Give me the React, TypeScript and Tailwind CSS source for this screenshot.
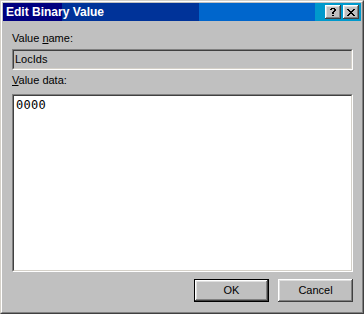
import React from "react";

const raised =
  "shadow-[inset_-1px_-1px_0_#404040,inset_1px_1px_0_#ffffff,inset_-2px_-2px_0_#808080,inset_2px_2px_0_#dfdfdf]";

function CloseGlyph() {
  const rows = [
    "XX....XX",
    ".XX..XX.",
    "..XXXX..",
    "...XX...",
    "..XXXX..",
    ".XX..XX.",
    "XX....XX",
  ];
  return (
    <svg width="8" height="7" viewBox="0 0 8 7" shapeRendering="crispEdges">
      {rows.flatMap((r, y) =>
        r.split("").map((c, x) =>
          c === "X" ? <rect key={`${x}-${y}`} x={x} y={y} width={1} height={1} fill="#000" /> : null
        )
      )}
    </svg>
  );
}

function HelpGlyph() {
  const rows = [
    ".XXXX.",
    "XX..XX",
    "....XX",
    "...XX.",
    "..XX..",
    "..XX..",
    "......",
    "..XX..",
  ];
  return (
    <svg width="6" height="8" viewBox="0 0 6 8" shapeRendering="crispEdges">
      {rows.flatMap((r, y) =>
        r.split("").map((c, x) =>
          c === "X" ? <rect key={`${x}-${y}`} x={x} y={y} width={1} height={1} fill="#000" /> : null
        )
      )}
    </svg>
  );
}

export default function App() {
  return (
    <div
      className="w-[364px] h-[314px] bg-[#c0c0c0] border border-t-[#d4d0c8] border-l-[#d4d0c8] border-r-[#404040] border-b-[#404040] text-black"
      style={{ fontFamily: '"Liberation Sans", Arial, sans-serif' }}
    >
      <div className="h-full border border-t-white border-l-white border-r-[#808080] border-b-[#808080] p-px flex flex-col">
        {/* Title bar */}
        <div className="h-[18px] flex items-center pl-[3px] pr-[2px] bg-[linear-gradient(to_right,#000080_0px,#000080_59px,#003399_59px,#003399_196px,#0066cc_196px,#0066cc_312px,#0099cc_312px)]">
          <span className="text-white font-bold text-[12px] leading-[14px] flex-1">Edit Binary Value</span>
          <div className={`w-[16px] h-[14px] bg-[#c0c0c0] flex items-center justify-center ${raised}`}>
            <HelpGlyph />
          </div>
          <div className={`w-[16px] h-[14px] ml-[2px] bg-[#c0c0c0] flex items-center justify-center ${raised}`}>
            <CloseGlyph />
          </div>
        </div>

        {/* Content */}
        <div className="flex-1 flex flex-col pl-[9px] pr-[8px] text-[11px] leading-[13px]">
          <div className="mt-[11px]">
            Value <span className="underline">n</span>ame:
          </div>
          <div className="mt-[4px] h-[21px] border border-t-[#808080] border-l-[#808080] border-r-white border-b-white">
            <div className="h-full border border-t-[#404040] border-l-[#404040] border-r-[#d4d0c8] border-b-[#d4d0c8] flex items-center pl-[1px]">
              LocIds
            </div>
          </div>
          <div className="mt-[4px]">
            <span className="underline">V</span>alue data:
          </div>
          <div className="mt-[7px] h-[178px] border border-t-[#808080] border-l-[#808080] border-r-white border-b-white">
            <div className="h-full bg-white border border-t-[#404040] border-l-[#404040] border-r-[#d4d0c8] border-b-[#d4d0c8] pl-[2px] pt-[2px]">
              <span className="text-[12px] leading-[14px] tracking-[0.3px]" style={{ fontFamily: '"DejaVu Sans Mono", monospace' }}>
                0000
              </span>
            </div>
          </div>
          <div className="mt-[7px] flex justify-end gap-[9px]">
            <div className="w-[75px] h-[23px] border border-black">
              <div className={`h-full flex items-center justify-center ${raised}`}>OK</div>
            </div>
            <div className={`w-[75px] h-[23px] flex items-center justify-center ${raised}`}>Cancel</div>
          </div>
        </div>
      </div>
    </div>
  );
}
